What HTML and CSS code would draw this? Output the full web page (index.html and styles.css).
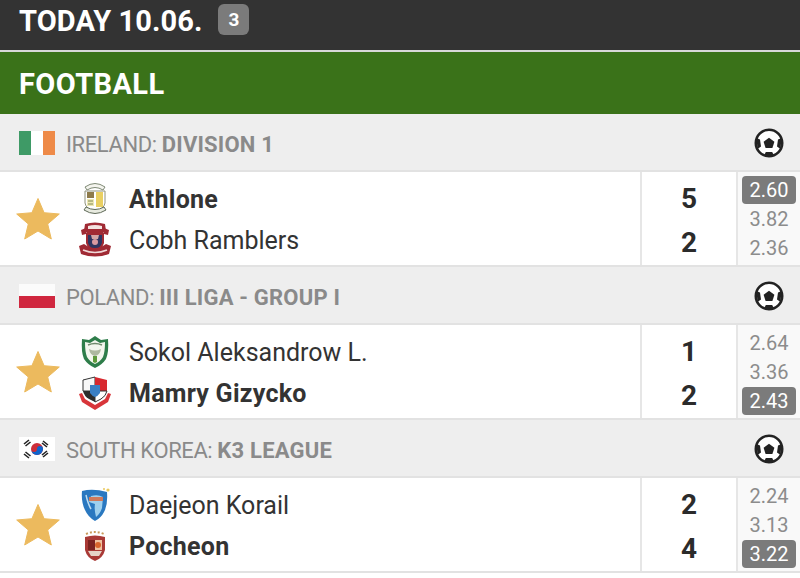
FILE: index.html
```html
<!DOCTYPE html>
<html lang="en">
<head>
<meta charset="utf-8">
<title>Today</title>
<link rel="stylesheet" href="styles.css">
</head>
<body>
<svg class="defs" width="0" height="0" aria-hidden="true">
  <defs>
    <symbol id="ball" viewBox="0 0 30 30">
      <circle cx="15" cy="15" r="13.200" fill="#fff" stroke="#222" stroke-width="2.600"/>
      <path d="M15 9.800l5.400 3.900-2 6.300h-6.800l-2-6.300z" fill="#222"/>
      <path d="M2.500 10l3.500 1.500 1 7-3.500 2.500zM27.500 10L24 11.500l-1 7 3.500 2.500z" fill="#222"/>
      <path d="M10 27.500l1.800-3.500h6.400l1.800 3.500z" fill="#222"/>
    </symbol>
    <symbol id="star" viewBox="0 0 44 44">
      <path d="M22 1.500l6.100 14.200 15.200 1.300-11.600 10 3.600 15-13.300-8-13.300 8 3.600-15L.7 17l15.200-1.300z" fill="#ecba5e" stroke="#ecba5e" stroke-linejoin="round"/>
    </symbol>
  </defs>
</svg>

<header class="day">
  <h1 class="day-title">TODAY 10.06.</h1>
  <span class="day-count">3</span>
</header>
<h2 class="sport">FOOTBALL</h2>

<section>
  <div class="league">
    <svg class="flag" viewBox="0 0 36 24"><rect width="12" height="24" fill="#3e9a66"/><rect x="12" width="12" height="24" fill="#fff"/><rect x="24" width="12" height="24" fill="#ee8a48"/></svg>
    <span class="league-name">IRELAND: <b>DIVISION 1</b></span>
    <svg class="ball"><use href="#ball"/></svg>
  </div>
  <div class="match">
    <div class="teams">
      <svg class="star"><use href="#star"/></svg>
      <div class="rows">
        <div class="team win">
          <svg class="crest" viewBox="0 0 34 36">
            <path d="M7 6q10-7 20 0l-2 3q-8-5-16 0z" fill="#f4f4ee" stroke="#7f8a76"/>
            <path d="M7 10h20v12q-1 6-10 9-9-3-10-9z" fill="#fff" stroke="#8f917c"/>
            <rect x="9" y="11" width="7" height="6" fill="#8e7a4a"/><rect x="18" y="11" width="7" height="15" fill="#e9cf62"/>
            <rect x="9" y="18" width="7" height="7" fill="#efe9b4"/><path d="M10 20h5M10 23h5" stroke="#7f8a58"/>
            <path d="M6 29q11 7 22 0l-2-3q-9 5-18 0z" fill="#e8ebe0" stroke="#5f6a58"/>
          </svg>
          <span>Athlone</span>
        </div>
        <div class="team">
          <svg class="crest" viewBox="0 0 34 36">
            <path d="M7 2q10-3 20 0l1 7-3 2H9L6 9z" fill="#a02a34"/>
            <path d="M10 4q7-2 14 0v3H10z" fill="#f3e3e0"/>
            <path d="M3 8l5-2v6l-4 1zM31 8l-5-2v6l4 1z" fill="#a02a34"/>
            <path d="M9 12h16v9q-2 6-8 8-6-2-8-8z" fill="#2e3560" stroke="#a02a34" stroke-width="2"/>
            <path d="M13 13h8l-1 4h-6z" fill="#d3a6a6"/><circle cx="17" cy="20" r="3" fill="#d99aa0"/>
            <path d="M1 24l5-2q11 8 22 0l5 2-2 8q-14 5-28 0z" fill="#a02a34"/>
            <path d="M5 28q12 5 24 0" fill="none" stroke="#f0d8d8" stroke-width="1.600"/>
          </svg>
          <span>Cobh Ramblers</span>
        </div>
      </div>
    </div>
    <div class="score"><span>5</span><span>2</span></div>
    <div class="odds"><span class="odd on">2.60</span><span class="odd">3.82</span><span class="odd">2.36</span></div>
  </div>
</section>

<section>
  <div class="league">
    <svg class="flag" viewBox="0 0 36 24"><rect width="36" height="12" fill="#fbfbfb"/><rect y="12" width="36" height="12" fill="#d0273f"/></svg>
    <span class="league-name">POLAND: <b>III LIGA - GROUP I</b></span>
    <svg class="ball"><use href="#ball"/></svg>
  </div>
  <div class="match">
    <div class="teams">
      <svg class="star"><use href="#star"/></svg>
      <div class="rows">
        <div class="team">
          <svg class="crest" viewBox="0 0 34 36">
            <path d="M17 2l6 4 7-1q1 13-2 20-4 6-11 9-7-3-11-9Q3 18 4 5l7 1z" fill="#2e7d4a"/>
            <path d="M17 6l5 3 5-1q0 10-2 15-3 5-8 7-5-2-8-7Q7 18 7 8l5 1z" fill="#f3f6ee"/>
            <path d="M10 11q7-3 14 0" fill="none" stroke="#6f8a6c" stroke-width="1.500"/>
            <path d="M11 15q6 3 12 0-1 6-6 7-5-1-6-7z" fill="#aeb8a0"/>
            <path d="M15 22h4v6l-2 1-2-1z" fill="#5f9a3c"/>
          </svg>
          <span>Sokol Aleksandrow L.</span>
        </div>
        <div class="team win">
          <svg class="crest" viewBox="0 0 34 36">
            <path d="M5 5l12-3v14H5z" fill="#f7f7f7" stroke="#333"/>
            <path d="M17 2l12 3v11H17z" fill="#d8282f"/>
            <path d="M5 16h12v11l-6-3q-5-3-6-8z" fill="#2c2c2c"/>
            <path d="M17 16h12q-1 5-6 8l-6 3z" fill="#fff" stroke="#333"/>
            <path d="M12 10h10v8q-2 3-5 4-3-1-5-4z" fill="#3a7fc4"/>
            <path d="M1 19l3 8 13 8 13-8 3-8-3-1-3 6-10 6-10-6-3-6z" fill="#d8353a"/>
          </svg>
          <span>Mamry Gizycko</span>
        </div>
      </div>
    </div>
    <div class="score"><span>1</span><span>2</span></div>
    <div class="odds"><span class="odd">2.64</span><span class="odd">3.36</span><span class="odd on">2.43</span></div>
  </div>
</section>

<section>
  <div class="league">
    <svg class="flag" viewBox="0 0 36 24"><rect width="36" height="24" fill="#fff"/><circle cx="18" cy="12" r="6" fill="#cd2e3a"/><path d="M12 12a3 3 0 0 0 6 0 3 3 0 0 1 6 0 6 6 0 0 1-12 0z" fill="#0f64cd"/><path d="M5 7l5-4M6.500 9l5-4M24 4l5 4M23 6l5 4M5 17l5 4M6.500 15l5 4M24 20l5-4M23 18l5-4" stroke="#222" stroke-width="1.600"/></svg>
    <span class="league-name">SOUTH KOREA: <b>K3 LEAGUE</b></span>
    <svg class="ball"><use href="#ball"/></svg>
  </div>
  <div class="match">
    <div class="teams">
      <svg class="star"><use href="#star"/></svg>
      <div class="rows">
        <div class="team">
          <svg class="crest" viewBox="0 0 34 36">
            <path d="M4 4q11-3 25 1 1 13-3 20-3 6-9 9-7-4-10-11Q3 15 4 4z" fill="#2a78c0"/>
            <path d="M13 9q7-2 12 1l-1 11q-2 6-6 9-2-8-1-13l-6-2z" fill="#9fd0ee"/>
            <path d="M8 8q2 9 5 14" fill="none" stroke="#bcdcf0" stroke-width="1.500"/>
            <rect x="11" y="10" width="14" height="4" fill="#cf7a5c"/>
            <circle cx="30" cy="3" r="1.600" fill="#eac85c"/><circle cx="26" cy="2" r="1" fill="#eac85c"/>
          </svg>
          <span>Daejeon Korail</span>
        </div>
        <div class="team win">
          <svg class="crest" viewBox="0 0 34 36">
            <path d="M8 6q9-4 18 0" fill="none" stroke="#c99a5a" stroke-width="2" stroke-dasharray="2 2"/>
            <path d="M7 9q10-3 20 0v13q-2 8-10 11-8-3-10-11z" fill="#a93a36"/>
            <rect x="10" y="12" width="7" height="10" fill="#7c2320"/>
            <rect x="17" y="12" width="7" height="10" fill="#f0c2a0"/>
            <circle cx="20" cy="17" r="3" fill="#d9652c"/>
            <path d="M10 23h14l-3 5h-8z" fill="#e6d4c8"/>
          </svg>
          <span>Pocheon</span>
        </div>
      </div>
    </div>
    <div class="score"><span>2</span><span>4</span></div>
    <div class="odds"><span class="odd">2.24</span><span class="odd">3.13</span><span class="odd on">3.22</span></div>
  </div>
</section>
</body>
</html>
```

FILE: styles.css
```css
* { box-sizing: border-box; }
html, body { margin: 0; padding: 0; }
body {
  width: 800px;
  height: 578px;
  overflow: hidden;
  background: #fff;
  font-family: "Roboto", "Liberation Sans", sans-serif;
  color: #333;
}
.defs { position: absolute; }

.day {
  height: 52px;
  background: #333;
  border-bottom: 2px solid #d8d8d8;
  padding: 0 0 8px 19px;
  display: flex;
  align-items: center;
  gap: 16px;
}
.day-title {
  margin: 0;
  font-size: 29px;
  font-weight: 700;
  letter-spacing: 0.1px;
  color: #fff;
  line-height: 36px;
}
.day-count {
  width: 31px;
  height: 31px;
  margin-bottom: 3px;
  border-radius: 6px;
  background: #7b7b7b;
  color: #fff;
  font-size: 19px;
  font-weight: 700;
  display: flex;
  align-items: center;
  justify-content: center;
}

.sport {
  margin: 0;
  height: 62px;
  padding-left: 19px;
  background: #3a7219;
  color: #fff;
  font-size: 29px;
  font-weight: 700;
  letter-spacing: 0.4px;
  line-height: 64px;
}

.league {
  height: 57.5px;
  background: #eee;
  border-bottom: 2px solid #e2e2e2;
  display: flex;
  align-items: center;
  padding: 5px 16px 0 19px;
}
.flag { width: 36px; height: 24px; flex: none; margin-bottom: 3px; }
.league-name {
  margin-left: 11px;
  flex: 1;
  font-size: 22px;
  letter-spacing: -0.4px;
  color: #8a8a8a;
}
.league-name b { font-weight: 700; letter-spacing: 0.2px; }
.ball { width: 30px; height: 30px; flex: none; margin-bottom: 2px; }

.match {
  height: 95.5px;
  display: flex;
  border-bottom: 2px solid #e2e2e2;
}
.teams {
  width: 642px;
  border-right: 2px solid #e6e6e6;
  display: flex;
  align-items: center;
  padding-left: 16px;
}
.star { width: 44px; height: 44px; flex: none; margin-top: 2px; }
.rows { margin-left: 18px; padding-top: 3px; display: flex; flex-direction: column; gap: 5px; }
.team {
  height: 36px;
  display: flex;
  align-items: center;
  font-size: 25px;
  color: #333;
}
.team.win { font-weight: 700; letter-spacing: 0.25px; }
.crest { width: 34px; height: 36px; flex: none; margin-right: 17px; }

.score {
  width: 96px;
  padding-top: 5px;
  border-right: 2px solid #e6e6e6;
  display: flex;
  flex-direction: column;
  align-items: center;
  justify-content: center;
  gap: 8px;
  font-size: 28px;
  font-weight: 700;
  line-height: 36px;
  color: #2b2b2b;
}

.odds {
  flex: 1;
  background: #f9f9f9;
  padding: 4px 4px 0;
  display: flex;
  flex-direction: column;
  gap: 0.5px;
}
.odd {
  height: 28.5px;
  border-radius: 4px;
  font-size: 20px;
  line-height: 28.5px;
  text-align: center;
  color: #8c8c8c;
}
.odd.on { background: #7b7b7b; color: #fff; }
```
